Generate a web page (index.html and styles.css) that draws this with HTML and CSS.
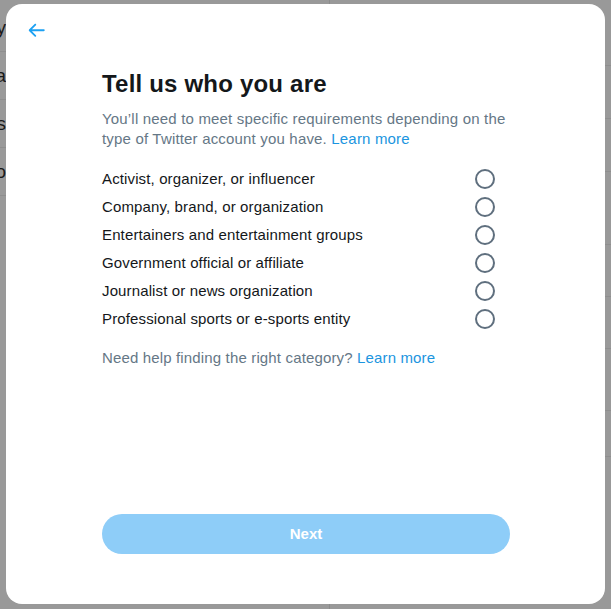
FILE: index.html
```html
<!DOCTYPE html>
<html lang="en">
<head>
<meta charset="utf-8">
<title>Tell us who you are</title>
<link rel="stylesheet" href="styles.css">
</head>
<body>
<div class="page">
  <div class="side">
    <div class="side-row"><span>Privacy</span></div>
    <div class="side-row"><span>Topica</span></div>
    <div class="side-row"><span>Lists</span></div>
    <div class="side-row"><span>Bookmarko</span></div>
  </div>
  <div class="main-col"></div>
  <div class="right-col">
    <div class="r-row r1"></div>
    <div class="r-row r2"></div>
    <div class="r-row r3"></div>
    <div class="r-row r4"></div>
    <div class="r-row r5"></div>
    <div class="r-row r6"></div>
    <div class="r-row r7"></div>
    <div class="r-row r8"></div>
  </div>
</div>

<div class="modal">
  <div class="modal-header">
    <button class="back" aria-label="Back">
      <svg viewBox="0 0 24 24" width="22.5" height="22.5"><path fill="#1da1f2" d="M20 11H7.414l4.293-4.293c.39-.39.39-1.023 0-1.414s-1.023-.39-1.414 0l-6 6c-.39.39-.39 1.023 0 1.414l6 6c.195.195.45.293.707.293s.512-.098.707-.293c.39-.39.39-1.023 0-1.414L7.414 13H20c.553 0 1-.447 1-1s-.447-1-1-1z"/></svg>
    </button>
  </div>
  <div class="modal-body">
    <h1 class="title">Tell us who you are</h1>
    <p class="subtitle">You’ll need to meet specific requirements depending on the type of Twitter account you have. <a class="link" href="#">Learn more</a></p>
    <ul class="options">
      <li class="option"><span>Activist, organizer, or influencer</span><span class="radio"></span></li>
      <li class="option"><span>Company, brand, or organization</span><span class="radio"></span></li>
      <li class="option"><span>Entertainers and entertainment groups</span><span class="radio"></span></li>
      <li class="option"><span>Government official or affiliate</span><span class="radio"></span></li>
      <li class="option"><span>Journalist or news organization</span><span class="radio"></span></li>
      <li class="option"><span>Professional sports or e-sports entity</span><span class="radio"></span></li>
    </ul>
    <p class="help">Need help finding the right category? <a class="link" href="#">Learn more</a></p>
    <button class="next" disabled>Next</button>
  </div>
</div>
</body>
</html>
```
FILE: styles.css
```css
* { box-sizing: border-box; }
html, body { margin: 0; padding: 0; }
body {
  width: 611px;
  height: 609px;
  overflow: hidden;
  background: #999999;
  font-family: "Liberation Sans", Arial, sans-serif;
  position: relative;
}
.page {
  display: flex;
  height: 609px;
}
.side {
  width: 120px;
  flex: none;
  display: flex;
  flex-direction: column;
  margin-left: -114px;
  padding-top: 4px;
}
.side-row {
  height: 48px;
  border-bottom: 1px solid #8e8e8e;
  display: flex;
  align-items: center;
  justify-content: flex-end;
  font-size: 19px;
  color: #1a1a1a;
}
.main-col {
  width: 324px;
  flex: none;
  border-right: 1px solid #8c8c8c;
}
.right-col {
  flex: 1;
  display: flex;
  flex-direction: column;
}
.r-row { border-bottom: 1px solid #8e8e8e; flex: none; }
.r1 { height: 66px; }
.r2 { height: 53px; }
.r3 { height: 53px; }
.r4 { height: 73px; }
.r5 { height: 52px; }
.r6 { height: 52px; }
.r7 { height: 62px; }
.r8 { height: 46px; }

.modal {
  position: absolute;
  left: 6px;
  top: 4px;
  width: 599px;
  height: 600px;
  background: #ffffff;
  border-radius: 16px;
  display: flex;
  flex-direction: column;
}
.modal-header {
  height: 53px;
  flex: none;
  display: flex;
  align-items: center;
  padding-left: 19px;
}
.back {
  border: 0;
  background: none;
  padding: 0;
  width: 22.5px;
  height: 22.5px;
  display: block;
}
.back svg { display: block; }
.modal-body {
  flex: 1;
  display: flex;
  flex-direction: column;
  padding: 13px 95px 50px 96px;
}
.title {
  margin: 0;
  font-size: 24px;
  line-height: 28px;
  font-weight: 700;
  color: #14171a;
  letter-spacing: 0.2px;
}
.subtitle {
  margin: 11px 0 0;
  font-size: 15px;
  line-height: 20px;
  color: #657786;
  letter-spacing: 0.18px;
}
.link {
  color: #1b95e0;
  text-decoration: none;
}
.options {
  list-style: none;
  margin: 15px 0 0;
  padding: 0;
}
.option {
  height: 28px;
  display: flex;
  align-items: center;
  justify-content: space-between;
  font-size: 15px;
  color: #14171a;
  letter-spacing: 0.13px;
}
.radio {
  width: 20px;
  height: 20px;
  border: 2px solid #5f6f7e;
  border-radius: 50%;
  margin: 2px 15px 0 0;
  flex: none;
}
.help {
  margin: 16px 0 0;
  font-size: 15px;
  line-height: 20px;
  color: #657786;
  letter-spacing: 0.15px;
}
.next {
  margin-top: auto;
  height: 40px;
  width: 100%;
  border: 0;
  border-radius: 999px;
  background: #8ecdf8;
  color: #ffffff;
  font-family: "Liberation Sans", Arial, sans-serif;
  font-size: 15px;
  font-weight: 700;
  padding: 0 0 2px;
}
```
